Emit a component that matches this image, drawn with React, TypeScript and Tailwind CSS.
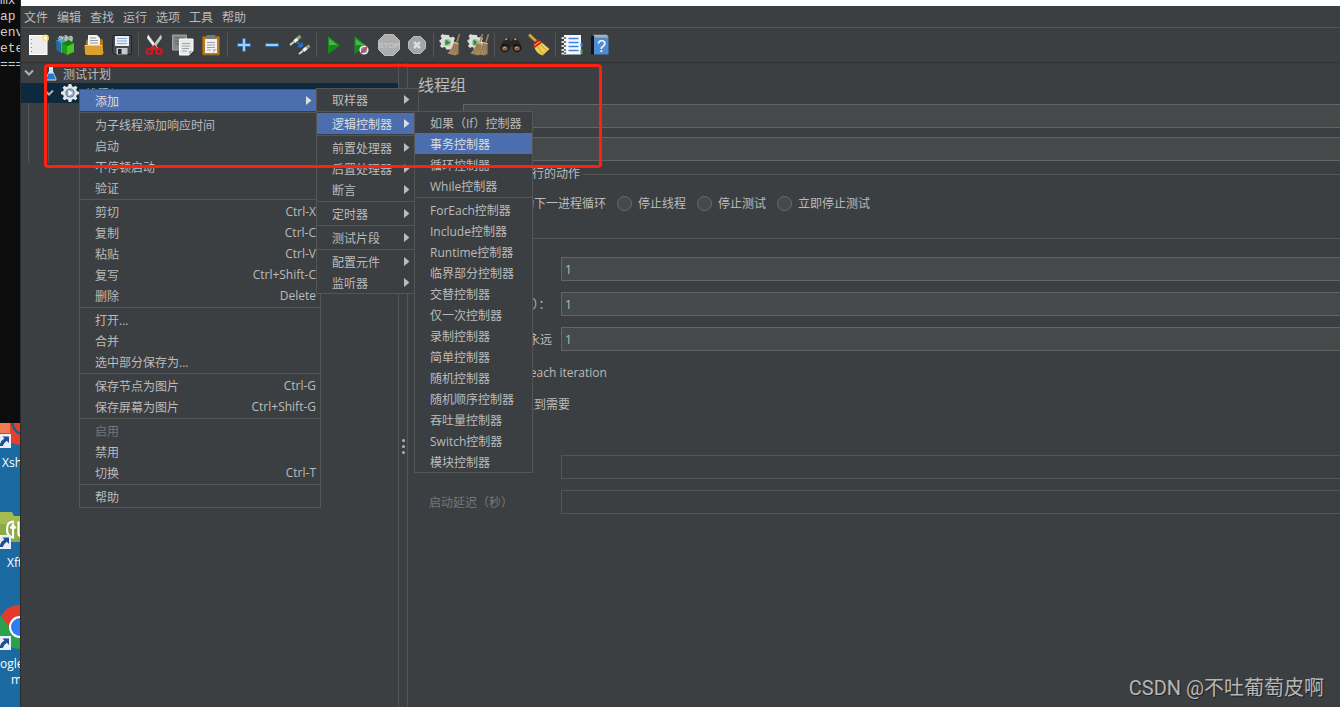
import React, { useState } from "react";
import clsx from "clsx";

type Entry = { label: string; keys?: string; sub?: boolean; disabled?: boolean } | "-";

const contextMenu: Entry[] = [
  { label: "添加", sub: true },
  "-",
  { label: "为子线程添加响应时间" },
  { label: "启动" },
  { label: "不停顿启动" },
  { label: "验证" },
  "-",
  { label: "剪切", keys: "Ctrl-X" },
  { label: "复制", keys: "Ctrl-C" },
  { label: "粘贴", keys: "Ctrl-V" },
  { label: "复写", keys: "Ctrl+Shift-C" },
  { label: "删除", keys: "Delete" },
  "-",
  { label: "打开..." },
  { label: "合并" },
  { label: "选中部分保存为..." },
  "-",
  { label: "保存节点为图片", keys: "Ctrl-G" },
  { label: "保存屏幕为图片", keys: "Ctrl+Shift-G" },
  "-",
  { label: "启用", disabled: true },
  { label: "禁用" },
  { label: "切换", keys: "Ctrl-T" },
  "-",
  { label: "帮助" },
];

const addMenu: Entry[] = [
  { label: "取样器", sub: true },
  "-",
  { label: "逻辑控制器", sub: true },
  "-",
  { label: "前置处理器", sub: true },
  { label: "后置处理器", sub: true },
  { label: "断言", sub: true },
  "-",
  { label: "定时器", sub: true },
  "-",
  { label: "测试片段", sub: true },
  "-",
  { label: "配置元件", sub: true },
  { label: "监听器", sub: true },
];

const controllerMenu: Entry[] = [
  { label: "如果（If）控制器" },
  { label: "事务控制器" },
  { label: "循环控制器" },
  { label: "While控制器" },
  "-",
  { label: "ForEach控制器" },
  { label: "Include控制器" },
  { label: "Runtime控制器" },
  { label: "临界部分控制器" },
  { label: "交替控制器" },
  { label: "仅一次控制器" },
  { label: "录制控制器" },
  { label: "简单控制器" },
  { label: "随机控制器" },
  { label: "随机顺序控制器" },
  { label: "吞吐量控制器" },
  { label: "Switch控制器" },
  { label: "模块控制器" },
];

function Menu({ items, active, className }: { items: Entry[]; active: string; className: string }) {
  return (
    <div role="menu" className={clsx("absolute flex flex-col border border-[#555555] bg-[#3c3f41]", className)}>
      {items.map((item, i) =>
        item === "-" ? (
          <div key={i} role="separator" className="flex h-[3px] items-center">
            <div className="h-px w-full bg-[#555555]" />
          </div>
        ) : (
          <button
            key={i}
            role="menuitem"
            disabled={item.disabled}
            className={clsx(
              "flex h-[21px] items-center justify-between whitespace-nowrap pr-1 pl-[15px] text-left",
              item.label === active && "bg-[#4b6eaf] text-[#dddddd]",
              item.disabled && "text-[#777777]"
            )}
          >
            <span className="pt-0.5">{item.label}</span>
            {item.keys && <span className="pt-px">{item.keys}</span>}
            {item.sub && (
              <svg width="14" height="10" viewBox="0 0 14 10" fill="currentColor" aria-hidden="true">
                <path d="M4 0 L9.500 4.500 L4 9 Z" />
              </svg>
            )}
          </button>
        )
      )}
    </div>
  );
}

function Gear() {
  return (
    <svg width="18" height="18" viewBox="0 0 18 18" aria-hidden="true">
      <path
        d="M7.600 0h2.800l.5 2.200 1.600.7 2-1.200 1.900 1.900-1.200 2 .7 1.600 2.100.5v2.600l-2.100.5-.7 1.600 1.200 2-1.900 1.900-2-1.200-1.600.7-.5 2.200H7.600l-.5-2.200-1.600-.7-2 1.200-1.900-1.900 1.200-2-.7-1.600L0 10.300V7.700l2.100-.5.7-1.600-1.200-2 1.900-1.900 2 1.200 1.600-.7z"
        fill="#e6e6e6"
      />
      <circle cx="9" cy="9" r="4.600" fill="#4f6f9c" />
      <circle cx="9" cy="9" r="3.800" fill="#8fa9cb" />
      <path d="M7.500 6 L12 9 L7.500 12 Z" fill="#ffffff" />
    </svg>
  );
}

function Broom({ x = 0 }: { x?: number }) {
  return (
    <g transform={`translate(${x} 0)`}>
      <path d="M18.500 0 L16 8" stroke="#a08158" strokeWidth="1.600" />
      <path d="M13 8 L17.500 9 L17.500 20 L14 21.500 L6.500 19.500 C10 16 11.500 12 13 8 Z" fill="#a98a62" />
      <path d="M14 10 L10 20 M15 11 L13 21 M16.300 11 L15.800 21" stroke="#7d6241" strokeWidth="0.600" />
      <path d="M12.500 8.500 L17.500 9.500" stroke="#d6bb93" strokeWidth="1.200" />
    </g>
  );
}

function ToolGear() {
  return (
    <>
      <path
        d="M7 1h3l.5 2 1.500.6L14 2.500l2 2-1.200 2 .6 1.500 2 .5v3l-2 .5-.6 1.500-3 2H7l-.5-2-1.500-.6-2 1.100-2-2 1.200-2-.6-1.500-1.100-.5v-2l1.600-.5.6-1.500-1.200-2 2-2 2 1.100 1.500-.6z"
        fill="#dcdedb"
      />
      <circle cx="8.500" cy="8.500" r="3.600" fill="#a9c29c" />
      <path d="M6.500 5.500 L11.500 8.500 L6.500 11.500 Z" fill="#27913a" />
    </>
  );
}

const icons: Record<string, React.ReactNode> = {
  new: (
    <>
      <rect x="2.500" y="1.500" width="17.500" height="19" fill="#ececec" stroke="#ffffff" />
      <path d="M4.500 5v1M4.500 9v1M4.500 13v1M4.500 17v1" stroke="#8b8b8b" />
      <circle cx="18.500" cy="4" r="3.600" fill="#f5e66f" opacity="0.800" />
      <circle cx="18.500" cy="4" r="1.600" fill="#ffffff" />
    </>
  ),
  templates: (
    <>
      <path d="M3 4 Q5 0 8 3 Q11 -1 13 3 Q17 0 18 4 L17 9 L5 9 Z" fill="#b8bdbd" />
      <path d="M4 5l2-2M8 6l2-4M12 7l3-4" stroke="#6d7878" />
      <path d="M1 6 L6 9 L6 19 L1.500 16 Z" fill="#1f6fa9" />
      <path d="M1 6 L9 5 L11 9 L11 17 L6 19 L6 9 Z" fill="#42a4d8" />
      <path d="M7 9 L12 12 L12 21 L7 18 Z" fill="#249a17" />
      <path d="M12 12 L19 9 L19 18 L12 21 Z" fill="#45c629" />
      <path d="M7 9 L14 6 L19 9 L12 12 Z" fill="#128108" />
    </>
  ),
  open: (
    <>
      <path d="M3 9 Q3 5 6 5 L18 5 Q20 5 20 8 L20 17 L3 18 Z" fill="#b97910" />
      <path d="M5 1h9l3 3v8H5z" fill="#f2f2f2" />
      <path d="M7 4h6M7 6.500h8M7 9h8" stroke="#9a9a9a" />
      <path d="M1.500 11 L19 11 L20.500 19 Q20 21 18 21 L4 21 Q2 21 2 19 Z" fill="#dda02c" />
      <path d="M2 11.500h17" stroke="#f5cc70" />
    </>
  ),
  save: (
    <>
      <path d="M2 1.500h18.500v19H3.500L1.500 18z" fill="#434a52" stroke="#20252a" />
      <rect x="4" y="2" width="14" height="10" fill="#e9eff7" />
      <path d="M6 4.500h10M6 7h10M6 9.500h10" stroke="#88a9d1" />
      <rect x="5.500" y="14" width="11" height="6.500" fill="#c7cbcf" />
      <rect x="7" y="15" width="3.500" height="5" fill="#22272c" />
    </>
  ),
  cut: (
    <>
      <path d="M4 .5 L14 14 L11.500 15.500 L3 4 Z" fill="#f0f0f0" />
      <path d="M17 .5 L7 14 L9.500 15.500 L18 4 Z" fill="#c6c6c6" />
      <ellipse cx="5.500" cy="17.500" rx="2.800" ry="2.500" fill="none" stroke="#d9161c" strokeWidth="2.200" />
      <ellipse cx="15" cy="17.500" rx="2.800" ry="2.500" fill="none" stroke="#d9161c" strokeWidth="2.200" />
      <path d="M7 15.500 L10.300 12.500 L13.500 15.500" stroke="#d9161c" strokeWidth="2.400" fill="none" />
    </>
  ),
  copy: (
    <>
      <path d="M.5 1 h14 v15 h-14z" fill="#858987" stroke="#a2a5a3" />
      <path d="M3 4h9M3 7h5M3 10h4" stroke="#5f6462" />
      <path d="M7.500 5h13.500v12l-4 4h-9.500z" fill="#e9e9e9" stroke="#ffffff" />
      <path d="M10 9.500h8M10 12h8M10 14.500h7M10 17h5" stroke="#a3a3a3" />
      <path d="M17 21v-4h4z" fill="#b0b0b0" />
    </>
  ),
  paste: (
    <>
      <rect x="2.500" y="2.500" width="17" height="18.500" rx="1" fill="#b77a24" stroke="#8c5a13" />
      <rect x="5" y="5" width="12" height="14" fill="#f2f2f2" />
      <rect x="6.500" y="1" width="9" height="4" rx="1" fill="#777b78" />
      <path d="M7 8.500h8M7 11h8M7 13.500h8M7 16h4" stroke="#a0a0a0" />
      <path d="M13 19v-4h4z" fill="#bcbcbc" />
    </>
  ),
  plus: <path d="M9.500 4.500h3v5h5v3h-5v5h-3v-5h-5v-3h5z" fill="#a5ceee" stroke="#2d6fb4" />,
  minus: <rect x="4.500" y="9.500" width="13" height="3" fill="#a5ceee" stroke="#2d6fb4" />,
  toggle: (
    <>
      <path d="M1 11 L6 7" stroke="#d9d9d9" strokeWidth="1.800" />
      <path d="M5 8 L11.500 2" stroke="#80a873" strokeWidth="3.200" />
      <path d="M5.500 7.500 L8.500 5" stroke="#f3f3f3" strokeWidth="3" />
      <path d="M10 20 L15 16" stroke="#d9d9d9" strokeWidth="1.800" />
      <path d="M14 17 L20.500 11.500" stroke="#80a873" strokeWidth="3.200" />
      <path d="M14.500 16.500 L17.500 14" stroke="#f3f3f3" strokeWidth="3" />
      <path d="M7.500 7.500 L12 11.500 M13 8.500 L13 12.500 L9 12.500" stroke="#2f7bd0" strokeWidth="1.500" fill="none" />
    </>
  ),
  start: (
    <>
      <path d="M6 2 L18 11.500 L6 20 Z" fill="#168b1c" />
      <path d="M7 4.500 L15.500 11 L7 11 Z" fill="#48b64a" />
    </>
  ),
  startNoPause: (
    <>
      <path d="M4.500 2 L16.500 11.500 L4.500 20 Z" fill="#168b1c" />
      <path d="M5.500 4.500 L14 11 L5.500 11 Z" fill="#48b64a" />
      <circle cx="14" cy="16" r="4.600" fill="#e9eef4" />
      <circle cx="14" cy="16" r="3" fill="#5792cc" />
      <path d="M11 19 L17 13" stroke="#df3a2c" strokeWidth="1.800" />
    </>
  ),
  stop: (
    <>
      <path d="M6.500 .5h9l6 6v9l-6 6h-9l-6-6v-9z" fill="#adadad" stroke="#bebebe" />
      <text x="11" y="14" textAnchor="middle" fontSize="8" fontFamily="Liberation Sans, sans-serif" fill="#d0d0d0">
        STOP
      </text>
    </>
  ),
  shutdown: (
    <>
      <path d="M7.500 2.500h7l5 5v7l-5 5h-7l-5-5v-7z" fill="#a5a5a5" stroke="#b8b8b8" />
      <path d="M8 8l6 6M14 8l-6 6" stroke="#dedede" strokeWidth="2.600" />
    </>
  ),
  clear: (
    <>
      <ToolGear />
      <Broom x={2} />
    </>
  ),
  clearAll: (
    <>
      <ToolGear />
      <Broom x={-3} />
      <Broom x={3} />
    </>
  ),
  search: (
    <>
      <path d="M5 4h4l1 3h2l1-3h4l4.500 8v4h-7l-1.500-4h-2L9.500 16H.5v-4z" fill="#292725" />
      <path d="M5 5.500l2.500-.5M14 5l2.500.5" stroke="#9e9e9b" strokeWidth="1.500" />
      <circle cx="4.800" cy="14" r="4.300" fill="#171515" />
      <circle cx="17" cy="14" r="4.300" fill="#171515" />
      <ellipse cx="4.800" cy="14.500" rx="3" ry="2.300" fill="#8a5b44" />
      <ellipse cx="17" cy="14.500" rx="3" ry="2.300" fill="#8a5b44" />
      <path d="M3.500 14l2-1M15.500 14l2-1" stroke="#dcc1ad" />
    </>
  ),
  searchReset: (
    <>
      <path d="M2 1.500 L9 8" stroke="#cfa536" strokeWidth="3" strokeLinecap="round" />
      <path d="M6 11 L12 7 L21.500 15 L14.500 21.500 Q7 19 6 11 Z" fill="#edcd54" />
      <path d="M10 13 L15 20 M13 11 L18.500 17" stroke="#c89b26" />
      <path d="M5 10.500 L11.500 5.500" stroke="#c51f16" strokeWidth="2.200" />
      <path d="M6.500 13 L13.500 8" stroke="#c51f16" strokeWidth="1.800" />
    </>
  ),
  helper: (
    <>
      <rect x="3" y="1" width="17" height="19.500" fill="#f5f8fd" />
      <path d="M7.500 4.500h10M7.500 8.500h10M7.500 12.500h10M7.500 16.500h10" stroke="#3d82e0" strokeWidth="1.400" />
      <path d="M.5 4h5M.5 8h5M.5 12h5M.5 16h5M.5 19.500h5" stroke="#dadada" strokeWidth="1.800" />
      <path d="M4 3v2M4 7v2M4 11v2M4 15v2M4 18v2" stroke="#1d1d1d" />
      <path d="M20.500 9v4" stroke="#2f80df" strokeWidth="2" />
      <path d="M20.500 15v5" stroke="#2fae3d" strokeWidth="2" />
    </>
  ),
  help: (
    <>
      <path d="M2 1.500h3v19H2z" fill="#11151b" />
      <path d="M5 3 L19.500 3 L19.500 20.500 L5 20.500 Z" fill="#4d8bd4" />
      <path d="M4 .8h14l1.500 2.700H6z" fill="#a7b3bf" />
      <text x="12.500" y="17.500" textAnchor="middle" fontSize="16" fontFamily="Liberation Sans, sans-serif" fill="#ffffff">
        ?
      </text>
    </>
  ),
};

const toolbar: [string, string][][] = [
  [["new", "新建"], ["templates", "模板"], ["open", "打开"], ["save", "保存"]],
  [["cut", "剪切"], ["copy", "复制"], ["paste", "粘贴"]],
  [["plus", "展开"], ["minus", "折叠"], ["toggle", "切换"]],
  [["start", "启动"], ["startNoPause", "不停顿启动"], ["stop", "停止"], ["shutdown", "关闭"]],
  [["clear", "清除"], ["clearAll", "清除全部"]],
  [["search", "查找"], ["searchReset", "重置查找"]],
  [["helper", "函数助手"], ["help", "帮助"]],
];

function Toolbar() {
  return (
    <div role="toolbar" className="flex h-[35px] items-center border-b border-[#323232] pl-[3px]">
      {toolbar.map((group, g) => (
        <React.Fragment key={g}>
          {g > 0 && (
            <div className="flex w-[5px] justify-center">
              <div className="h-6 w-px bg-[#555555]" />
            </div>
          )}
          {group.map(([icon, title]) => (
            <button key={icon} aria-label={title} className="flex h-7 w-7 items-center justify-center">
              <svg width="22" height="22" viewBox="0 0 22 22" fill="none" aria-hidden="true">
                {icons[icon]}
              </svg>
            </button>
          ))}
        </React.Fragment>
      ))}
    </div>
  );
}

function Shortcut({ y }: { y: number }) {
  return (
    <g transform={`translate(0 ${y})`}>
      <rect x="-3" y="0" width="14" height="14" fill="#e8edf8" />
      <path d="M2.500 2.500h6.500v6.500l-2.200-2.200q-3 2-4 5.200h-3q0-5 4.600-7.500z" fill="#1f4f93" />
    </g>
  );
}

function Desktop() {
  return (
    <div className="flex w-[21px] shrink-0 flex-col overflow-hidden border-r border-[#2b2b2b] bg-[#1b6aa1] text-white">
      <pre className="h-[423px] shrink-0 bg-[#0c0c0c] font-['Liberation_Mono',monospace] text-[13px] leading-4 text-[#cccccc]">
        <span className="-mt-[7px] block">{"mx\nap\nenv\nete\n==="}</span>
      </pre>
      <svg width="20" height="25" viewBox="0 0 20 25" className="shrink-0" aria-hidden="true">
        <path d="M0 0h20v22Q8 21 0 10z" fill="#e2402b" />
        <path d="M0 0h10v10H0z" fill="#f07a52" />
        <path d="M12 0q2 8 8 11" stroke="#16628f" strokeWidth="2.500" fill="none" />
        <Shortcut y={11} />
      </svg>
      <span className="mt-1.5 pt-px pl-0.5 leading-4">Xsh</span>
      <svg width="20" height="37" viewBox="0 0 20 37" className="mt-[41px] shrink-0" aria-hidden="true">
        <path d="M0 0h12l2 4h6v26H0z" fill="#a3bb52" />
        <path d="M0 12h20v18H0z" fill="#7f9f3c" opacity="0.600" />
        <path d="M14 9.500q-7 0-7 7.500t6 8.500v-12M10.500 16.500l2.500-4 2.500 4M18.500 9.500v13l3 3" stroke="#ffffff" strokeWidth="2.200" fill="none" />
        <Shortcut y={23} />
      </svg>
      <span className="mt-[5px] pt-px pl-[7px] leading-4">Xft</span>
      <svg width="20" height="45" viewBox="0 0 20 45" className="mt-[34px] shrink-0" aria-hidden="true">
        <circle cx="20" cy="22" r="22" fill="#2ba14b" />
        <path d="M1 11Q7 0 20 0v22H9z" fill="#e23b2e" />
        <circle cx="20" cy="22" r="11" fill="#ffffff" />
        <circle cx="20" cy="22" r="9" fill="#2f7df0" />
        <Shortcut y={31} />
      </svg>
      <span className="mt-1.5 leading-4">ogle</span>
      <span className="pl-[11px] leading-4">m</span>
    </div>
  );
}

function Chevron() {
  return (
    <svg width="10" height="8" viewBox="0 0 10 8" fill="none" aria-hidden="true">
      <path d="M1 1.500 L5 5.500 L9 1.500" stroke="#b0b0b0" strokeWidth="2" />
    </svg>
  );
}

function Tree() {
  return (
    <div role="tree" className="w-[378px] shrink-0 border-r border-[#555555]">
      <div role="treeitem" className="flex h-5 items-center pl-[3px]">
        <Chevron />
        <svg width="12" height="16" viewBox="0 0 12 16" className="ml-[11px]" aria-hidden="true">
          <path d="M4 1h4v5l3.500 8q0 1.500-1.500 1.500H2Q.5 15.500.5 14L4 6z" fill="#d8e6f2" />
          <path d="M3.500 8.500h5l2.500 6H1z" fill="#2779cf" />
        </svg>
        <span className="ml-1.5 pt-[3px]">测试计划</span>
      </div>
      <div role="treeitem" aria-selected="true" className="flex h-5 items-center bg-[#0d293e] pl-[23px]">
        <Chevron />
        <span className="ml-[7px]">
          <Gear />
        </span>
        <span className="ml-1.5 pt-[3px]">线程组</span>
      </div>
      <div className="ml-[7px] h-[60px] w-[21px] border-x border-[#555555]" />
    </div>
  );
}

const fieldClass =
  "h-6 min-w-0 flex-1 border border-r-0 border-[#646464] bg-[#45494a] px-[3px] outline-none disabled:border-[#555555] disabled:bg-[#3c3f41]";

function Field({ id, label, disabled, value }: { id: string; label: React.ReactNode; disabled?: boolean; value?: string }) {
  return (
    <div className="flex items-center">
      <label htmlFor={id} className={clsx("w-[132px] pt-0.5 whitespace-nowrap", disabled && "text-[#777777]")}>
        {label}
      </label>
      <input id={id} defaultValue={value} disabled={disabled} className={fieldClass} />
    </div>
  );
}

function Check({ label, checked }: { label: string; checked?: boolean }) {
  return (
    <label className="flex h-4 items-center gap-1.5 whitespace-nowrap">
      <input type="checkbox" defaultChecked={checked} className="size-[15px] appearance-none border border-[#6b6b6b] bg-[#45494a]" />
      <span className="pt-px">{label}</span>
    </label>
  );
}

const errorActions = ["继续", "启动下一进程循环", "停止线程", "停止测试", "立即停止测试"];

function ThreadGroupForm() {
  const [action, setAction] = useState("继续");

  return (
    <div className="min-w-0 flex-1 border-l border-[#555555] pt-[10px] pl-[10px]">
      <h1 className="text-base leading-6">线程组</h1>
      <div className="mt-[7px] flex flex-col gap-[9px]">
        <div className="flex items-end">
          <label htmlFor="name" className="w-[45px]">名称：</label>
          <input id="name" className={fieldClass} />
        </div>
        <div className="flex items-end">
          <label htmlFor="comment" className="w-[45px]">注释：</label>
          <input id="comment" className={fieldClass} />
        </div>
      </div>

      <fieldset className="mt-[5px] min-w-0 border-t border-[#555555]">
        <legend className="ml-1.5 pr-[3px] leading-4">在取样器错误后要执行的动作</legend>
        <div className="flex gap-[11px] pt-[13px] pl-[15px]">
          {errorActions.map((name) => (
            <label key={name} className="flex h-4 items-center gap-1.5 whitespace-nowrap">
              <input
                type="radio"
                name="on-error"
                checked={action === name}
                onChange={() => setAction(name)}
                className="size-[15px] appearance-none rounded-full border border-[#6b6b6b] bg-[#45494a] checked:border-4"
              />
              <span className="pt-0.5">{name}</span>
            </label>
          ))}
        </div>
      </fieldset>

      <fieldset className="mt-[19px] min-w-0 border-t border-[#555555]">
        <legend className="ml-1.5 pr-[3px] leading-4">线程属性</legend>
        <div className="flex flex-col pt-[11px] pl-[11px]">
          <div className="flex flex-col gap-[11px]">
            <Field id="threads" label="线程数：" value="1" />
            <Field id="ramp-up" label="Ramp-Up 时间（秒）：" value="1" />
            <div className="flex items-center">
              <div className="flex w-[132px] items-center justify-between pr-[9px]">
                <label htmlFor="loops">循环次数</label>
                <Check label="永远" />
              </div>
              <input id="loops" defaultValue="1" className={fieldClass} />
            </div>
          </div>
          <div className="mt-[13px] flex flex-col gap-4">
            <Check label="Same user on each iteration" checked />
            <Check label="延迟创建线程直到需要" />
            <Check label="调度器" />
          </div>
          <div className="mt-[11px] flex flex-col gap-[11px]">
            <Field id="duration" label="持续时间（秒）" disabled />
            <Field id="delay" label="启动延迟（秒）" disabled />
          </div>
        </div>
      </fieldset>
    </div>
  );
}

export default function App() {
  return (
    <div className="relative flex min-h-screen overflow-hidden bg-[#3c3f41] font-['Open_Sans','Noto_Sans_CJK_SC',sans-serif] text-xs text-[#bbbbbb]">
      <Desktop />

      <div className="flex min-w-0 flex-1 flex-col">
        <div className="h-1.5 bg-white" />
        <nav className="flex h-[22px] items-center gap-[9px] border-b border-[#555555] pt-0.5 pl-[3px]">
          {["文件", "编辑", "查找", "运行", "选项", "工具", "帮助"].map((name) => (
            <button key={name}>{name}</button>
          ))}
        </nav>
        <Toolbar />
        <div className="flex flex-1">
          <Tree />
          <div className="flex w-2 shrink-0 flex-col items-center justify-center gap-[3px] pt-[123px]">
            <span className="size-[3px] rounded-full bg-[#b0b0b0]" />
            <span className="size-[3px] rounded-full bg-[#b0b0b0]" />
            <span className="size-[3px] rounded-full bg-[#b0b0b0]" />
          </div>
          <ThreadGroupForm />
        </div>
      </div>

      <Menu items={contextMenu} active="添加" className="top-[89px] left-[79px] w-[242px]" />
      <Menu items={addMenu} active="逻辑控制器" className="top-[88px] left-[316px] w-[103px]" />
      <Menu items={controllerMenu} active="事务控制器" className="top-[111px] left-[414px] w-[119px]" />

      <div className="pointer-events-none absolute top-16 left-11 h-[104px] w-[558px] rounded-sm border-3 border-[#ff2010]" />
      <p className="absolute right-4 bottom-[7px] font-['Roboto','Noto_Sans_CJK_SC',sans-serif] text-xl leading-6 text-[#b5b6b7] [text-shadow:1px_1px_1px_#222222]">
        CSDN @不吐葡萄皮啊
      </p>
    </div>
  );
}
